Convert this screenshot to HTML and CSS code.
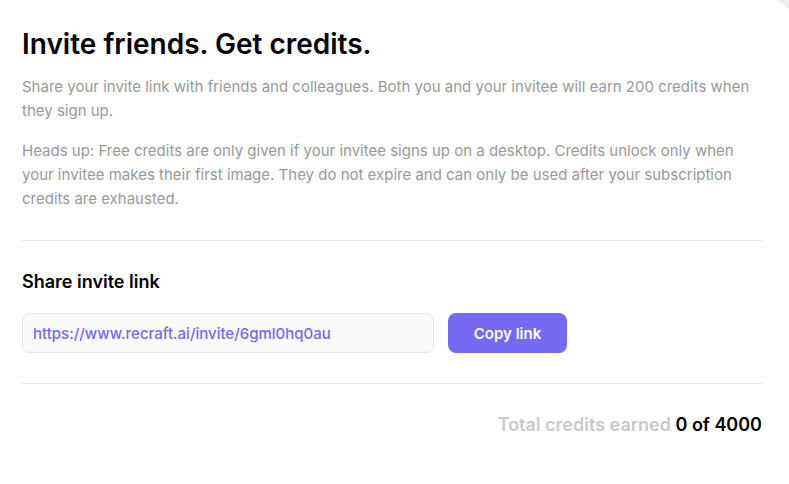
FILE: index.html
```html
<!DOCTYPE html>
<html lang="en">
<head>
<meta charset="utf-8">
<title>Invite friends</title>
<link rel="stylesheet" href="styles.css">
</head>
<body>
<div class="card">
  <h1 class="title">Invite friends. Get credits.</h1>
  <p class="text">Share your invite link with friends and colleagues. Both you and your invitee will earn 200 credits when they sign up.</p>
  <p class="text text-second">Heads up: Free credits are only given if your invitee signs up on a desktop. Credits unlock only when your invitee makes their first image. They do not expire and can only be used after your subscription credits are exhausted.</p>
  <hr class="divider divider-top">
  <h2 class="subtitle">Share invite link</h2>
  <div class="share-row">
    <div class="link-field">https://www.recraft.ai/invite/6gml0hq0au</div>
    <button class="copy-btn" type="button">Copy link</button>
  </div>
  <hr class="divider divider-bottom">
  <div class="total"><span class="total-label">Total credits earned</span> <span class="total-value">0 of 4000</span></div>
</div>
</body>
</html>
```
FILE: styles.css
```css
html, body {
  margin: 0;
  padding: 0;
}
body {
  background: #efefef;
  font-family: Inter, "Noto Sans", sans-serif;
  width: 789px;
  height: 484px;
  overflow: hidden;
}
.card {
  box-sizing: border-box;
  width: 789px;
  height: 484px;
  background: #ffffff;
  border-top-right-radius: 16px;
  padding: 26px 27px 0 22px;
}
.title {
  margin: 0;
  font-size: 28px;
  line-height: 36px;
  font-weight: 600;
  color: #000000;
}
.text {
  margin: 13px 0 0;
  font-size: 15px;
  line-height: 24px;
  color: #999999;
  font-weight: 400;
}
.text-second {
  margin-top: 16px;
}
.divider {
  border: 0;
  height: 1px;
  background: #e7e7e7;
  margin: 0;
}
.divider-top {
  margin-top: 29px;
}
.subtitle {
  margin: 29px 0 0;
  font-size: 18px;
  line-height: 24px;
  font-weight: 600;
  color: #000000;
}
.share-row {
  display: flex;
  gap: 14px;
  margin-top: 19px;
}
.link-field {
  box-sizing: border-box;
  width: 412px;
  height: 40px;
  background: #fafafa;
  border: 1px solid #e8e8e8;
  border-radius: 8px;
  padding: 0 10px;
  display: flex;
  align-items: center;
  font-size: 15px;
  font-weight: 500;
  color: #7867ef;
}
.copy-btn {
  width: 119px;
  height: 40px;
  border: 0;
  border-radius: 8px;
  background: #766af3;
  color: #ffffff;
  font-family: Inter, "Noto Sans", sans-serif;
  font-size: 15px;
  font-weight: 600;
  padding: 0;
  cursor: pointer;
}
.divider-bottom {
  margin-top: 30px;
}
.total {
  margin-top: 29px;
  text-align: right;
  font-size: 18px;
  line-height: 24px;
  font-weight: 600;
}
.total-label {
  color: #c9c9c9;
}
.total-value {
  color: #000000;
}
```
